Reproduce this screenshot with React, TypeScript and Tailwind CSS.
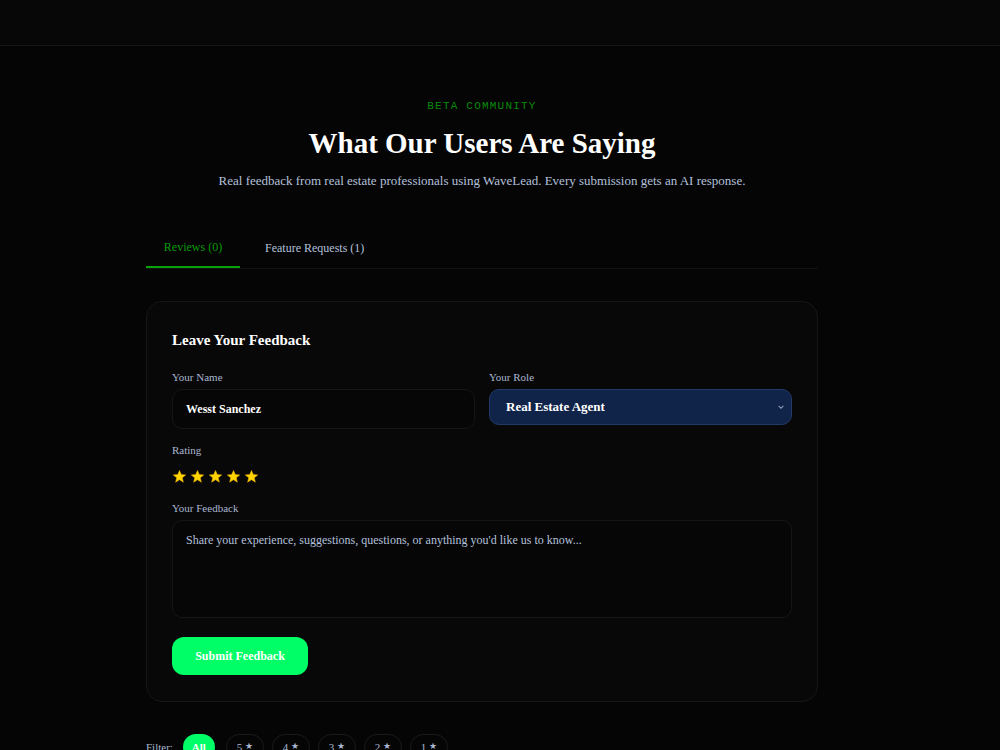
import React from "react";

const serif = { fontFamily: '"Liberation Serif", "Times New Roman", serif' };

function Star({ className = "" }: { className?: string }) {
  return (
    <svg viewBox="0 0 24 24" className={className} aria-hidden>
      <path
        d="M12 2.2l2.9 6.6 7.1.6-5.4 4.7 1.6 7-6.2-3.8-6.2 3.8 1.6-7L2 9.4l7.1-.6z"
        fill="#ffd400"
        stroke="#e0a800"
        strokeWidth="0.8"
        strokeLinejoin="round"
      />
    </svg>
  );
}

export default function App() {
  const filters = ["5", "4", "3", "2", "1"];
  return (
    <div className="min-h-[750px] bg-[#050505] text-white" style={serif}>
      <header className="h-[46px] border-b border-[#151515] bg-[#070707]" />

      <div className="pr-[36px]">
        <main className="mx-auto w-[672px] pt-[53px]">
          <section className="flex flex-col items-center text-center">
            <div
              className="text-[11px] leading-[14px] tracking-[0.11em] text-[#0b8a0b]"
              style={{ fontFamily: '"Liberation Mono", "DejaVu Sans Mono", monospace' }}
            >
              BETA COMMUNITY
            </div>
            <h1 className="mt-[12px] text-[29px] font-bold leading-[36px] text-white">
              What Our Users Are Saying
            </h1>
            <p className="mt-[11px] text-[13px] leading-[18px] text-[#b3c0dc]">
              Real feedback from real estate professionals using WaveLead. Every submission gets an AI
              response.
            </p>
          </section>

          <nav className="mt-[40px] flex border-b border-[#121212] text-[12px]">
            <button className="w-[94px] border-b-2 border-[#0aa00a] pb-[10px] pt-[8px] text-[#0b9a0b]">
              Reviews (0)
            </button>
            <button className="px-[25px] pb-[10px] pt-[8px] text-[#b3c0dc]">Feature Requests (1)</button>
          </nav>

          <section className="mt-[32px] rounded-2xl border border-[#161616] bg-[#080808] px-[25px] pb-[26px] pt-[28px]">
            <h2 className="text-[15px] font-bold leading-[20px]">Leave Your Feedback</h2>

            <div className="mt-[20px] grid grid-cols-2 gap-[14px]">
              <label className="flex flex-col">
                <span className="text-[11px] leading-[14px] text-[#a9b6d0]">Your Name</span>
                <div className="mt-[5px] flex h-[40px] items-center rounded-[10px] border border-[#161616] bg-[#060606] px-[13px] text-[12px] font-bold">
                  Wesst Sanchez
                </div>
              </label>
              <label className="flex flex-col">
                <span className="text-[11px] leading-[14px] text-[#a9b6d0]">Your Role</span>
                <div className="mt-[5px] flex h-[36px] items-center justify-between rounded-[10px] border border-[#233a66] bg-[#10244a] pl-[16px] pr-[6px] text-[13px] font-bold">
                  <span>Real Estate Agent</span>
                  <svg viewBox="0 0 10 10" className="h-[8px] w-[8px]" aria-hidden>
                    <path d="M2 3.5l3 3 3-3" fill="none" stroke="#8a97b3" strokeWidth="1.3" />
                  </svg>
                </div>
              </label>
            </div>

            <div className="mt-[14px] text-[11px] leading-[14px] text-[#a9b6d0]">Rating</div>
            <div className="mt-[11px] flex h-[16px] items-center gap-[3px]">
              {[0, 1, 2, 3, 4].map((i) => (
                <Star key={i} className="h-[15px] w-[15px]" />
              ))}
            </div>

            <div className="mt-[17px] text-[11px] leading-[14px] text-[#a9b6d0]">Your Feedback</div>
            <div className="mt-[5px] h-[98px] rounded-[10px] border border-[#161616] bg-[#060606] px-[13px] pt-[10px] text-[12px] text-[#b3c0dc]">
              Share your experience, suggestions, questions, or anything you'd like us to know...
            </div>

            <button className="mt-[19px] h-[38px] w-[136px] rounded-[12px] bg-[#00ff66] text-[12px] font-bold text-white">
              Submit Feedback
            </button>
          </section>

          <div className="mt-[32px] flex items-center gap-[8px] text-[11px]">
            <span className="mr-[2px] text-[#a9b6d0]">Filter:</span>
            <span className="mr-[3px] flex h-[26px] w-[32px] items-center justify-center rounded-full bg-[#00ff66] font-bold text-white">
              All
            </span>
            {filters.map((f) => (
              <span
                key={f}
                className="flex h-[26px] w-[38px] items-center justify-center gap-[3px] rounded-full border border-[#1a1a1a] text-[#a9b6d0]"
              >
                {f} <span className="text-[9px]">★</span>
              </span>
            ))}
          </div>
        </main>
      </div>
    </div>
  );
}
